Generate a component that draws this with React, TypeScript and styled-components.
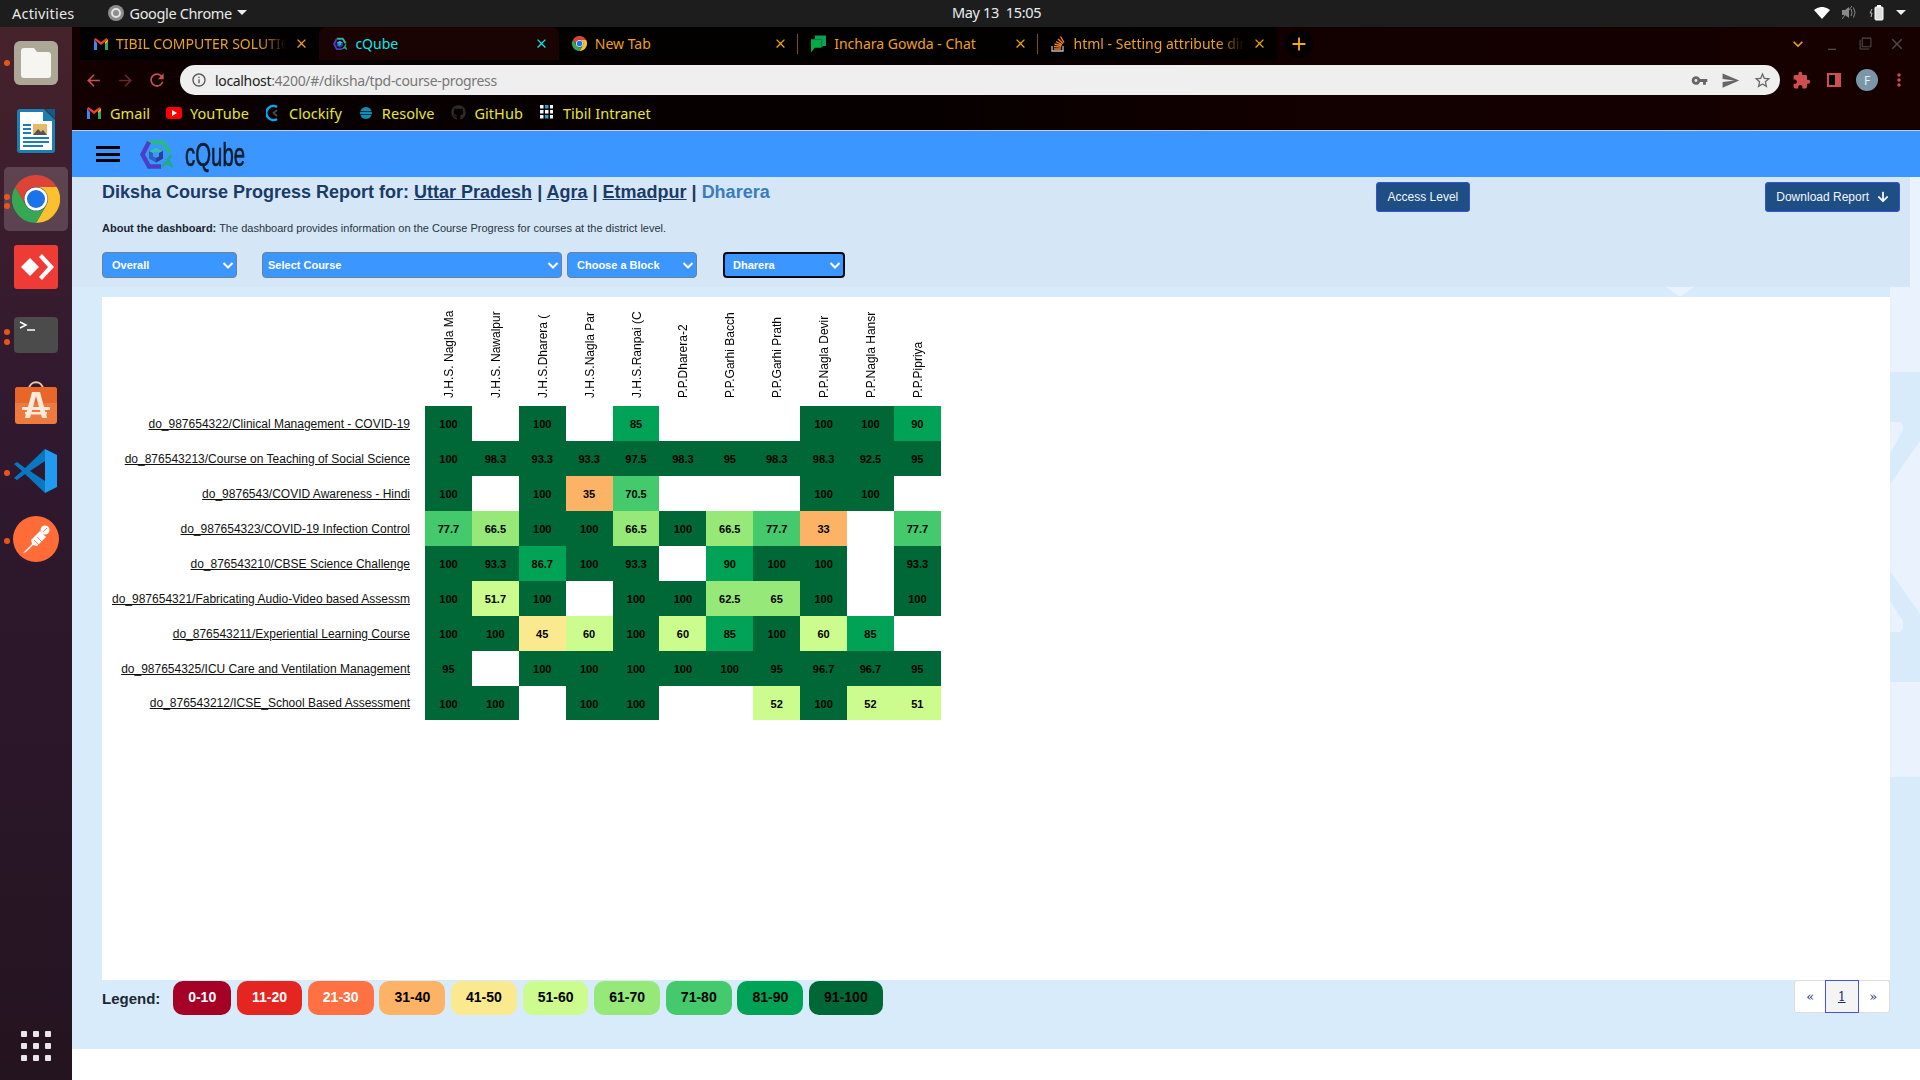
import React from "react";
import styled, { createGlobalStyle } from "styled-components";
import { FaArrowDown, FaGithub } from "react-icons/fa";
import {
  MdArrowBack, MdArrowForward, MdRefresh, MdInfoOutline, MdVpnKey, MdSend, MdStarBorder,
  MdExtension, MdMoreVert, MdClose, MdAdd, MdExpandMore, MdMinimize, MdFilterNone,
} from "react-icons/md";

const Global = createGlobalStyle`
  html, body { margin: 0; padding: 0; height: 100%; background: #fff; }
  body { font-family: "Liberation Sans", Arial, sans-serif; overflow: hidden; }
  * { box-sizing: border-box; }
`;

const Desktop = styled.div`width: 1920px; height: 1080px; display: flex; flex-direction: column; overflow: hidden;`;

/* ---------- GNOME top bar ---------- */
const TopBar = styled.header`
  height: 27px; flex: none; background: #1d1d1d; color: #e8e8e8; display: flex; align-items: center;
  font: 14.5px "Noto Sans", sans-serif; letter-spacing: -0.35px; padding: 0 0 2px 12px; position: relative;
`;
const Activities = styled.span`letter-spacing: 0.2px;`;
const AppMenu = styled.div`display: flex; align-items: center; gap: 5px; margin-left: 34px;`;
const Clock = styled.div`position: absolute; left: 952px; top: 2px; color: #e8eef4; word-spacing: 0;`;
const Tray = styled.div`margin-left: auto; display: flex; align-items: center; gap: 12px; padding-right: 14px;`;
const Caret = styled.span`width: 0; height: 0; border-left: 5px solid transparent; border-right: 5px solid transparent; border-top: 5px solid #eee;`;

/* ---------- Body ---------- */
const Workspace = styled.div`flex: 1; display: flex; min-height: 0;`;
const Dock = styled.nav`
  width: 72px; flex: none; padding-top: 2px; display: flex; flex-direction: column; align-items: center;
  background: linear-gradient(180deg, #46222b 0%, #31192f 35%, #2a1628 70%, #24141f 100%);
`;
const DockSlot = styled.div`height: 68px; width: 72px; display: flex; align-items: center; justify-content: center; position: relative;`;
const ActiveTile = styled.div`width: 64px; height: 64px; border-radius: 5px; background: rgba(255,255,255,.17); display: flex; align-items: center; justify-content: center;`;
const Pip = styled.span<{ $top: number }>`position: absolute; left: 4px; top: ${p => p.$top}px; width: 6px; height: 6px; border-radius: 50%; background: #e9541e;`;
const AppsGrid = styled.div`
  margin-top: auto; margin-bottom: 19px; display: grid; grid-template-columns: repeat(3, 6px); gap: 6px;
  span { width: 6px; height: 6px; border-radius: 1px; background: #e8e6e8; }
`;

const Main = styled.div`flex: 1; min-width: 0; display: flex; flex-direction: column;`;

/* ---------- Chrome ---------- */
const Browser = styled.div`
  height: 104px; flex: none; display: flex; flex-direction: column;
  background: linear-gradient(90deg, #140000 0%, #080000 12%, #060000 45%, #120000 65%, #170000 100%);
  border-bottom: 1px solid #c9c9d0;
`;
const TabStrip = styled.div`height: 38px; flex: none; display: flex; align-items: flex-start; padding-left: 8px; position: relative;`;
const IconSlot = styled.span<{ $w: number }>`width: ${p => p.$w}px; flex: none; display: flex; align-items: center; justify-content: center;`;
const Tab = styled.div<{ $active?: boolean; $sep?: boolean }>`
  width: 239.4px; height: 33px; display: flex; align-items: center; padding: 0 10px 0 13px; gap: 8px; position: relative;
  font: 14px "Noto Sans", sans-serif; letter-spacing: 0;
  color: ${p => (p.$active ? "#12e6e6" : "#eda11f")};
  background: ${p => (p.$active ? "#1a0303" : "#030000")};
  border-radius: ${p => (p.$active ? "8px 8px 0 0" : "0")};
  ${p => p.$sep && `&::after { content: ""; position: absolute; right: 0; top: 7px; height: 20px; width: 1px; background: #7a5412; }`}
  svg.close { margin-left: auto; flex: none; }
`;
const TabTitle = styled.span<{ $fade?: boolean }>`
  flex: 1; min-width: 0; overflow: hidden; white-space: nowrap;
  ${p => p.$fade && `-webkit-mask-image: linear-gradient(90deg, #000 85%, transparent 100%);`}
`;
const NewTab = styled.div`width: 28px; height: 28px; border-radius: 50%; background: #050000; color: #f4a920; display: flex; align-items: center; justify-content: center; margin: 3px 0 0 8px;`;
const WindowControls = styled.div`margin-left: auto; display: flex; align-items: center; height: 33px; padding-right: 6px; color: #4a4a4a;`;
const WinBtn = styled.div<{ $w: number; $accent?: boolean }>`width: ${p => p.$w}px; display: flex; justify-content: center; ${p => p.$accent && "color: #eda11f;"}`;
const Toolbar = styled.div`height: 30px; flex: none; display: flex; align-items: center; padding-left: 5px; color: #c84c4c;`;
const NavBtn = styled.div<{ $dim?: boolean }>`width: 32px; display: flex; justify-content: center; color: ${p => (p.$dim ? "#6a2a2a" : "#c85050")};`;
const Omnibox = styled.div`
  width: 1600px; height: 30px; margin-left: 7px; border-radius: 15px; background: #efefef; display: flex; align-items: center; padding: 0 8px 0 11px;
  font: 14px "Noto Sans", sans-serif; letter-spacing: -0.33px; color: #777; flex: none;
`;
const Host = styled.span`color: #222; margin-left: 8px;`;
const OmniIcons = styled.div`margin-left: auto; display: flex; gap: 13px; align-items: center; color: #666;`;
const Extras = styled.div`display: flex; align-items: center; margin-left: 12px; gap: 10px; color: #cf4e50;`;
const Panel = styled.span`width: 14px; height: 14px; border: 2px solid #cf4e50; border-right-width: 6px; background: #000; display: inline-block; margin: 0 5px 0 6px;`;
const Avatar = styled.span`width: 22px; height: 22px; border-radius: 50%; background: #7b96a8; color: #e8eef2; font: 12px "Noto Sans", sans-serif; display: flex; align-items: center; justify-content: center; margin-right: 1px;`;
const Bookmarks = styled.div`flex: 1; display: flex; align-items: center; padding-left: 14px; gap: 16px; color: #e6e62e; font: 14.5px "Noto Sans", sans-serif; letter-spacing: 0.05px;`;
const Bookmark = styled.div`display: flex; align-items: center; gap: 8px;`;

/* ---------- App ---------- */
const AppBar = styled.div`height: 46px; flex: none; background: #3c96ff; display: flex; align-items: center; padding-left: 24px;`;
const Burger = styled.div`
  width: 24px; height: 16px; display: flex; flex-direction: column; justify-content: space-between;
  span { height: 3px; background: #000; }
`;
const Brand = styled.div`margin-left: 20px; display: flex; align-items: center; gap: 12px;`;
const BrandName = styled.span`
  font: 34px "Liberation Sans", sans-serif; color: #0b1c2c; display: inline-block; width: 60px; -webkit-text-stroke: 0.6px #0b1c2c;
  transform: scaleX(0.6); transform-origin: left center; white-space: nowrap;
`;

const Page = styled.main`flex: 1; min-height: 0; display: flex; flex-direction: column; background: #d8ebfb; position: relative; margin-bottom: 31px;`;
const Watermark = styled.svg`position: absolute; left: 0; top: 0; width: 1848px; height: 872px; pointer-events: none;`;
const ReportHead = styled.section`
  width: 1838px; height: 110px; flex: none; background: #d5e7f6; padding: 5px 10px 0 30px; position: relative;
  display: flex; flex-direction: column;
`;
const HeadRow = styled.div`display: flex; align-items: flex-start; height: 30px;`;
const Title = styled.h1`
  margin: 0; flex: 1; font: bold 18px/20px "Liberation Sans", sans-serif; color: #1a3a68;
  a { color: inherit; text-decoration: underline; }
  em { font-style: normal; color: #3a7cc0; }
`;
const DarkButton = styled.button<{ $pad: number }>`
  height: 30px; border: 1px solid #3650d8; border-radius: 3px; background: #1f4e85; color: #f2f6fa;
  font: 12px "Liberation Sans", sans-serif; display: flex; align-items: center; gap: 8px; padding: 0 ${p => p.$pad}px;
`;
const AccessButton = styled(DarkButton)`margin-right: 295px;`;
const About = styled.p`margin: 9px 0 0; font: 11px/14px "Liberation Sans", sans-serif; color: #2a3440; b { color: #1a2430; }`;
const Filters = styled.div`display: flex; margin-top: 17px;`;
const Select = styled.div<{ $w: number; $gap: number; $focus?: boolean; $pad: number }>`
  width: ${p => p.$w}px; margin-right: ${p => p.$gap}px; height: 26px; border-radius: 4px; background: #3c96ff; color: #fff;
  border: ${p => (p.$focus ? "2px solid #050b14" : "1px solid #6e8194")};
  display: flex; align-items: center; justify-content: space-between; padding: 0 1px 0 ${p => p.$pad}px;
  font: bold 11px "Liberation Sans", sans-serif;
`;

const ChartCard = styled.section`
  margin: 10px 30px 0 30px; height: 683px; flex: none; background: #fff; position: relative;
  display: grid; grid-template-columns: 323px repeat(11, 46.9px); grid-template-rows: 109px repeat(8, 35px) 34px; align-content: start;
`;
const ColHead = styled.div`
  display: flex; justify-content: center; align-items: flex-start; padding: 0 0 8px 1px; height: 109px;
`;
const ColText = styled.span`
  writing-mode: vertical-rl; transform: rotate(180deg); font: 12px "Liberation Sans", sans-serif; color: #000; white-space: nowrap;
  height: 101px; text-align: left;
`;
const RowLabel = styled.a`
  display: flex; align-items: center; justify-content: flex-end; padding-right: 15px; white-space: nowrap;
  font: 12px "Liberation Sans", sans-serif; color: #111; text-decoration: underline;
`;
const Cell = styled.div<{ $bg: string }>`
  background: ${p => p.$bg}; display: flex; align-items: center; justify-content: center; padding-top: 1px;
  font: bold 11px "Liberation Sans", sans-serif; color: #000;
`;
const Footer = styled.section`flex: 1; display: flex; justify-content: space-between; align-items: flex-start; padding: 0 30px; position: relative;`;
const Legend = styled.div`display: flex; align-items: center; gap: 5.8px; margin-top: 1px;`;
const LegendLabel = styled.span`font: bold 15px "Liberation Sans", sans-serif; color: #1d2733; margin-right: 7px;`;
const Chip = styled.span<{ $bg: string; $light?: boolean }>`
  height: 34px; padding: 0 15px 2px; border-radius: 10px; background: ${p => p.$bg}; color: ${p => (p.$light ? "#fff" : "#000")};
  display: flex; align-items: center; font: bold 14px "Liberation Sans", sans-serif;
`;
const Pager = styled.div`display: flex; height: 33px; background: #fff; border: 1px solid #ddd; border-radius: 3px;`;
const PageCell = styled.a<{ $active?: boolean }>`
  width: 31.5px; display: flex; align-items: center; justify-content: center; font: 13px "DejaVu Serif", serif;
  color: #1f2a6c; background: ${p => (p.$active ? "#f4f4f4" : "transparent")};
  ${p => p.$active && "outline: 1px solid #4a50f0; text-decoration: underline; font-size: 12px;"}
`;

/* ---------- Data ---------- */
const buckets = [
  { label: "0-10", bg: "#a50026", light: true }, { label: "11-20", bg: "#e42520", light: true },
  { label: "21-30", bg: "#ff7043", light: true }, { label: "31-40", bg: "#fdb366" },
  { label: "41-50", bg: "#fae98f" }, { label: "51-60", bg: "#ccfb8e" },
  { label: "61-70", bg: "#96e878" }, { label: "71-80", bg: "#44c96d" },
  { label: "81-90", bg: "#00a255" }, { label: "91-100", bg: "#006837" },
];
const colour = (v: number | null) => (v === null ? "#fff" : buckets[Math.max(0, Math.ceil(v / 10) - 1)].bg);
const columns = ["J.H.S. Nagla Ma", "J.H.S. Nawalpur", "J.H.S.Dharera (", "J.H.S.Nagla Par", "J.H.S.Ranpai (C", "P.P.Dharera-2", "P.P.Garhi Bacch", "P.P.Garhi Prath", "P.P.Nagla Devir", "P.P.Nagla Hansr", "P.P.Pipriya"];
const _ = null;
const rows: [string, (number | null)[]][] = [
  ["do_987654322/Clinical Management - COVID-19", [100, _, 100, _, 85, _, _, _, 100, 100, 90]],
  ["do_876543213/Course on Teaching of Social Science", [100, 98.3, 93.3, 93.3, 97.5, 98.3, 95, 98.3, 98.3, 92.5, 95]],
  ["do_9876543/COVID Awareness - Hindi", [100, _, 100, 35, 70.5, _, _, _, 100, 100, _]],
  ["do_987654323/COVID-19 Infection Control", [77.7, 66.5, 100, 100, 66.5, 100, 66.5, 77.7, 33, _, 77.7]],
  ["do_876543210/CBSE Science Challenge", [100, 93.3, 86.7, 100, 93.3, _, 90, 100, 100, _, 93.3]],
  ["do_987654321/Fabricating Audio-Video based Assessm", [100, 51.7, 100, _, 100, 100, 62.5, 65, 100, _, 100]],
  ["do_876543211/Experiential Learning Course", [100, 100, 45, 60, 100, 60, 85, 100, 60, 85, _]],
  ["do_987654325/ICU Care and Ventilation Management", [95, _, 100, 100, 100, 100, 100, 95, 96.7, 96.7, 95]],
  ["do_876543212/ICSE_School Based Assessment", [100, 100, _, 100, 100, _, _, 52, 100, 52, 51]],
];

/* ---------- Drawn icons ---------- */
const GmailIcon = () => (
  <svg width="14" height="12" viewBox="0 0 14 12"><path d="M0 1.500V12h3V5z" fill="#4285f4" /><path d="M14 1.500V12h-3V5z" fill="#34a853" /><path d="M0 1.500 7 7l7-5.500L12.500 0 7 4 1.500 0z" fill="#ea4335" /><path d="M11 4v2l3-2.500V1.500z" fill="#fbbc04" /></svg>
);
const CubeLogo = ({ s }: { s: number }) => (
  <svg width={s} height={s} viewBox="0 0 33 30" fill="none">
    <path d="M9 2.500h14l7 11" stroke="#2cb58f" strokeWidth="4.500" />
    <path d="M9 2.500 2.500 15 9 27h12" stroke="#4b3fc6" strokeWidth="4.500" />
    <path d="M22 27l4-4 5 3-3-6 3-4" stroke="#22a98c" strokeWidth="3" />
    <path d="M16 8l7 3.500v7.500L16 23l-7-4v-7.500z" fill="#2f5ec0" />
    <path d="M16 8l7 3.500-7 3.500-7-3.500z" fill="#34c0b4" />
    <path d="M16 15l7-3.500v7.500L16 23z" fill="#2a3f9c" />
    <path d="M13 13.500l3-1.500 3 1.500v3.500l-3 1.500-3-1.500z" fill="#3c96ff" />
  </svg>
);
const ChromeIcon = ({ s }: { s: number }) => (
  <svg width={s} height={s} viewBox="0 0 48 48">
    <path d="M3.200 12A24 24 0 0 1 44.800 12H24a12 12 0 0 0-10.400 18z" fill="#db4437" />
    <path d="M44.800 12A24 24 0 0 1 24 48l10.400-18A12 12 0 0 0 24 12z" fill="#fbc02d" />
    <path d="M24 48A24 24 0 0 1 3.200 12l10.400 18a12 12 0 0 0 20.800 0z" fill="#34a853" />
    <circle cx="24" cy="24" r="11.500" fill="#fff" /><circle cx="24" cy="24" r="9" fill="#1a73e8" />
  </svg>
);
const ClockifyIcon = () => (
  <svg width="14" height="18" viewBox="0 0 14 18" fill="none"><path d="M11 3a7 7 0 1 0 0 12" stroke="#03a9f4" strokeWidth="2.600" /><path d="M11 6 7.500 9l3.500 3" stroke="#4a4a4a" strokeWidth="1.800" /></svg>
);
const ResolveIcon = () => (
  <svg width="12" height="12" viewBox="0 0 12 12"><circle cx="6" cy="6" r="6" fill="#0f8fb5" /><path d="M0 4.500h12M0 7.500h12" stroke="#0a2a38" strokeWidth="1" /></svg>
);
const DotsIcon = () => (
  <svg width="13" height="15" viewBox="0 0 13 15">
    {[0, 5, 10].flatMap(x => [0, 5, 10].map(y => <rect key={`${x}${y}`} x={x} y={y} width="3.500" height="3.500" fill={y === 5 && x === 5 ? "#fff" : x === 5 ? "#1ca6c8" : "#e6f6fa"} />))}
  </svg>
);
const FilesIcon = () => (
  <svg width="44" height="44" viewBox="0 0 44 44"><rect width="44" height="44" rx="6" fill="#aca796" /><path d="M7 10a3 3 0 0 1 3-3h10l3 4h11a3 3 0 0 1 3 3v20a3 3 0 0 1-3 3H10a3 3 0 0 1-3-3z" fill="#f7f5f1" /></svg>
);
const WriterIcon = () => (
  <svg width="38" height="44" viewBox="0 0 38 44"><path d="M3 0h24l11 11v30a3 3 0 0 1-3 3H3a3 3 0 0 1-3-3V3a3 3 0 0 1 3-3z" fill="#1c7fb4" /><path d="M3 3h23v9h9v29H3z" fill="#fff" /><path d="M28 0l10 10V0z" fill="#135b85" /><rect x="6" y="15" width="8" height="2" fill="#1c7fb4" /><rect x="6" y="19" width="8" height="2" fill="#1c7fb4" /><rect x="6" y="23" width="8" height="2" fill="#1c7fb4" /><rect x="16" y="15" width="14" height="11" fill="#e8b86a" /><path d="M16 26l5-6 3 3 2-2 4 5z" fill="#555" /><rect x="6" y="28" width="26" height="2" fill="#1c7fb4" /><rect x="6" y="32" width="26" height="2" fill="#1c7fb4" /><rect x="6" y="36" width="20" height="2" fill="#1c7fb4" /></svg>
);
const AnyDeskIcon = () => (
  <svg width="44" height="44" viewBox="0 0 44 44"><rect width="44" height="44" rx="3" fill="#ef3b36" /><path d="M16 13l9 9-9 9-9-9z" fill="#fff" /><path d="M25 12l3-3 12 13-12 13-3-3 9-10z" fill="#fff" /></svg>
);
const TerminalIcon = () => (
  <svg width="44" height="36" viewBox="0 0 44 36"><rect width="44" height="36" rx="4" fill="#4b4b4b" /><path d="M6 5l6 3-6 3" stroke="#fff" strokeWidth="1.500" fill="none" /><path d="M13 13h8" stroke="#fff" strokeWidth="1.500" /></svg>
);
const StoreIcon = () => (
  <svg width="44" height="46" viewBox="0 0 44 46">
    <path d="M15 9C16 0 28 0 29 9" stroke="#eccba8" strokeWidth="2" fill="none" />
    <path d="M4 7h36a3 3 0 0 1 3 3v31a3 3 0 0 1-3 3H4a3 3 0 0 1-3-3V10a3 3 0 0 1 3-3z" fill="#ee7a3e" />
    <path d="M4 7h36a3 3 0 0 1 3 3v13H1V10a3 3 0 0 1 3-3z" fill="#e9662a" />
    <path d="M18 12h8l7 26h-5l-6-22-6 22h-5z" fill="#fbe9dc" />
    <rect x="8" y="27" width="28" height="3" rx="1" fill="#fbe9dc" /><rect x="11" y="32" width="22" height="2.500" fill="#fbe9dc" />
  </svg>
);
const VSCodeIcon = () => (
  <svg width="44" height="44" viewBox="0 0 44 44"><path d="M31 0l12 6v32l-12 6z" fill="#1f9cf0" /><path d="M31 0 11 19 3 13 0 15l8 7-8 7 3 2 8-6 20 19V32L16 22 31 12z" fill="#0a77c2" /></svg>
);
const PostmanIcon = () => (
  <svg width="46" height="46" viewBox="0 0 46 46">
    <circle cx="23" cy="23" r="23" fill="#ff6c37" />
    <path d="M10 37l9-9-1-4 9-9 6 6-9 9-4-1-7 7z" fill="#fff" />
    <path d="M21 24l5 5M24 21l5 5" stroke="#ff6c37" strokeWidth=".8" />
    <circle cx="32" cy="14" r="4.500" fill="#fff" /><path d="M30 16l4-4" stroke="#ff6c37" strokeWidth=".8" />
  </svg>
);
const WifiIcon = () => <svg width="16" height="12" viewBox="0 0 16 12"><path d="M0 3a12 12 0 0 1 16 0L8 12z" fill="#fff" /></svg>;
const SpeakerIcon = () => <svg width="15" height="13" viewBox="0 0 15 13" fill="none"><path d="M0 4h3l4-3v11L3 9H0z" fill="#8a8a8a" /><path d="M9 3q2 3.500 0 7M11.500 1.500q3 5 0 10M0 13 10 0" stroke="#8a8a8a" /></svg>;
const BatteryIcon = () => <svg width="15" height="16" viewBox="0 0 15 16" fill="none"><path d="M3 4 1 8h2l-1 4" stroke="#bbb" /><rect x="6" y="2" width="8" height="13" rx="1" stroke="#fff" fill="#fff" fillOpacity=".85" /><rect x="8" y="0" width="4" height="2" fill="#fff" /></svg>;
const SOIcon = () => <svg width="14" height="17" viewBox="0 0 14 17" fill="none"><path d="M1 11v5h11v-5" stroke="#bbb" strokeWidth="1.300" /><path d="M3 14h7M3 11.500l7 .6M3.500 9l7 1.800M5 6.500l6 3.200M7 4l5 4.500M9.500 1.500l3.500 6" stroke="#f48024" strokeWidth="1.400" /></svg>;
const ChatIcon = () => <svg width="16" height="18" viewBox="0 0 16 18"><path d="M4 0h12v11h-3l-2 2V4H4z" fill="#0f9d58" /><path d="M0 4h11v9H4l-4 5z" fill="#00ac47" /></svg>;
const YouTubeIcon = () => <svg width="16" height="12" viewBox="0 0 16 12"><rect width="16" height="12" rx="3" fill="#f00" /><path d="M6 3l5 3-5 3z" fill="#fff" /></svg>;
const SelectChevron = () => (
  <svg width="14" height="14" viewBox="0 0 14 14" fill="none"><path d="M2.500 5 7 9.500 11.500 5" stroke="currentColor" strokeWidth="2" /></svg>
);

const dockApps = [
  { icon: <FilesIcon />, pips: [31] },
  { icon: <WriterIcon />, pips: [] },
  { icon: <ActiveTile><ChromeIcon s={48} /></ActiveTile>, pips: [29, 38] },
  { icon: <AnyDeskIcon />, pips: [] },
  { icon: <TerminalIcon />, pips: [28, 38] },
  { icon: <StoreIcon />, pips: [] },
  { icon: <VSCodeIcon />, pips: [33] },
  { icon: <PostmanIcon />, pips: [33] },
];

const tabs = [
  { title: "TIBIL COMPUTER SOLUTIONS", icon: <GmailIcon />, fade: true },
  { title: "cQube", icon: <CubeLogo s={14} />, active: true },
  { title: "New Tab", icon: <ChromeIcon s={15} />, sep: true },
  { title: "Inchara Gowda - Chat", icon: <ChatIcon />, sep: true },
  { title: "html - Setting attribute dir", icon: <SOIcon />, fade: true },
];

const bookmarks = [
  { label: "Gmail", icon: <GmailIcon /> }, { label: "YouTube", icon: <YouTubeIcon /> }, { label: "Clockify", icon: <ClockifyIcon /> },
  { label: "Resolve", icon: <ResolveIcon /> }, { label: "GitHub", icon: <FaGithub size={15} color="#2b2b2b" /> }, { label: "Tibil Intranet", icon: <DotsIcon /> },
];

export default function App() {
  return (
    <Desktop>
      <Global />
      <TopBar>
        <Activities>Activities</Activities>
        <AppMenu>
          <svg width="16" height="16" viewBox="0 0 16 16"><circle cx="8" cy="8" r="8" fill="#8d8d8d" /><circle cx="8" cy="8" r="4" fill="none" stroke="#e4e4e4" strokeWidth="2" /></svg>
          Google Chrome <Caret />
        </AppMenu>
        <Clock>May 13 &nbsp;15:05</Clock>
        <Tray><WifiIcon /><SpeakerIcon /><BatteryIcon /><Caret /></Tray>
      </TopBar>
      <Workspace>
        <Dock>
          {dockApps.map((a, i) => (
            <DockSlot key={i}>
              {a.pips.map(t => <Pip key={t} $top={t} />)}
              {a.icon}
            </DockSlot>
          ))}
          <AppsGrid>{Array.from({ length: 9 }, (_x, i) => <span key={i} />)}</AppsGrid>
        </Dock>
        <Main>
          <Browser>
            <TabStrip>
              {tabs.map(t => (
                <Tab key={t.title} $active={t.active} $sep={t.sep}>
                  <IconSlot $w={15}>{t.icon}</IconSlot>
                  <TabTitle $fade={t.fade}>{t.title}</TabTitle>
                  <MdClose className="close" size={15} />
                </Tab>
              ))}
              <NewTab><MdAdd size={22} /></NewTab>
              <WindowControls>
                <WinBtn $w={32} $accent><MdExpandMore size={20} /></WinBtn>
                <WinBtn $w={36}><MdMinimize size={16} /></WinBtn>
                <WinBtn $w={30}><MdFilterNone size={13} /></WinBtn>
                <WinBtn $w={34}><MdClose size={18} /></WinBtn>
              </WindowControls>
            </TabStrip>
            <Toolbar>
              <NavBtn><MdArrowBack size={19} /></NavBtn>
              <NavBtn $dim><MdArrowForward size={19} /></NavBtn>
              <NavBtn><MdRefresh size={20} /></NavBtn>
              <Omnibox>
                <MdInfoOutline size={16} color="#555" />
                <span><Host>localhost</Host>:4200/#/diksha/tpd-course-progress</span>
                <OmniIcons><MdVpnKey size={17} /><MdSend size={19} /><MdStarBorder size={19} /></OmniIcons>
              </Omnibox>
              <Extras>
                <MdExtension size={19} />
                <Panel />
                <Avatar>F</Avatar>
                <MdMoreVert size={20} />
              </Extras>
            </Toolbar>
            <Bookmarks>
              {bookmarks.map(b => <Bookmark key={b.label}><IconSlot $w={16}>{b.icon}</IconSlot>{b.label}</Bookmark>)}
            </Bookmarks>
          </Browser>
          <AppBar>
            <Burger><span /><span /><span /></Burger>
            <Brand><CubeLogo s={33} /><BrandName>cQube</BrandName></Brand>
          </AppBar>
          <Page>
            <Watermark viewBox="0 0 1848 872">
              <g fill="#eaf3fd">
                <rect x="1838" y="0" width="10" height="110" />
                <rect x="1818" y="110" width="30" height="85" />
                <rect x="1818" y="505" width="30" height="95" />
                <path d="M1818 245h10q4 2 3 8l-13 24zM1818 307l30-43v173l-30-43zM1818 424l13 20q1 9-3 11h-10z" />
                <path d="M1608 120l14-10h-28z" />
              </g>
            </Watermark>
            <ReportHead>
              <HeadRow>
                <Title>Diksha Course Progress Report for: <a>Uttar Pradesh</a> | <a>Agra</a> | <a>Etmadpur</a> | <em>Dharera</em></Title>
                <AccessButton $pad={11}>Access Level</AccessButton>
                <DarkButton $pad={10}>Download Report <FaArrowDown size={12} /></DarkButton>
              </HeadRow>
              <About><b>About the dashboard:</b> The dashboard provides information on the Course Progress for courses at the district level.</About>
              <Filters>
                <Select $w={135} $gap={25} $pad={9}>Overall<SelectChevron /></Select>
                <Select $w={300} $gap={5} $pad={5}>Select Course<SelectChevron /></Select>
                <Select $w={130} $gap={26} $pad={9}>Choose a Block<SelectChevron /></Select>
                <Select $w={122} $gap={0} $pad={8} $focus>Dharera<SelectChevron /></Select>
              </Filters>
            </ReportHead>
            <ChartCard>
              <div />
              {columns.map(c => <ColHead key={c}><ColText>{c}</ColText></ColHead>)}
              {rows.map(([label, values]) => (
                <React.Fragment key={label}>
                  <RowLabel>{label}</RowLabel>
                  {values.map((v, i) => <Cell key={i} $bg={colour(v)}>{v ?? ""}</Cell>)}
                </React.Fragment>
              ))}
            </ChartCard>
            <Footer>
              <Legend>
                <LegendLabel>Legend:</LegendLabel>
                {buckets.map(b => <Chip key={b.label} $bg={b.bg} $light={b.light}>{b.label}</Chip>)}
              </Legend>
              <Pager>
                <PageCell>«</PageCell>
                <PageCell $active>1</PageCell>
                <PageCell>»</PageCell>
              </Pager>
            </Footer>
          </Page>
        </Main>
      </Workspace>
    </Desktop>
  );
}
